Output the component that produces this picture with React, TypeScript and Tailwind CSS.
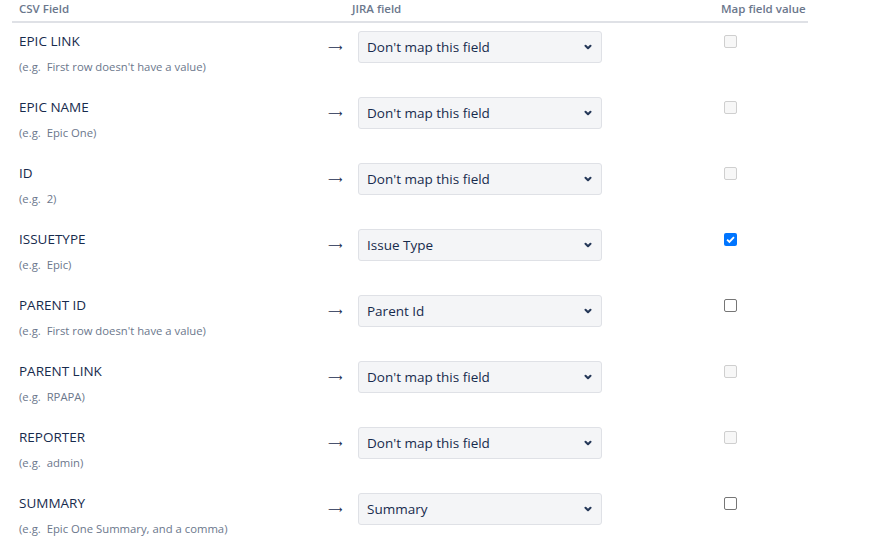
import { ChevronDown } from "lucide-react";

type Row = {
  name: string;
  example: string;
  value: string;
  mapState: "disabled" | "checked" | "unchecked";
};

const rows: Row[] = [
  { name: "EPIC LINK", example: "First row doesn't have a value", value: "Don't map this field", mapState: "disabled" },
  { name: "EPIC NAME", example: "Epic One", value: "Don't map this field", mapState: "disabled" },
  { name: "ID", example: "2", value: "Don't map this field", mapState: "disabled" },
  { name: "ISSUETYPE", example: "Epic", value: "Issue Type", mapState: "checked" },
  { name: "PARENT ID", example: "First row doesn't have a value", value: "Parent Id", mapState: "unchecked" },
  { name: "PARENT LINK", example: "RPAPA", value: "Don't map this field", mapState: "disabled" },
  { name: "REPORTER", example: "admin", value: "Don't map this field", mapState: "disabled" },
  { name: "SUMMARY", example: "Epic One Summary, and a comma", value: "Summary", mapState: "unchecked" },
];

function FieldSelect({ value }: { value: string }) {
  return (
    <div className="relative w-[244px] h-[32px]">
      <select
        defaultValue={value}
        className="appearance-none w-full h-full pl-[8px] pr-[28px] bg-[#f4f5f7] border border-[#dfe1e6] rounded-[3px] text-[13.5px] text-[#172b4d] outline-none"
      >
        <option>Don't map this field</option>
        <option>Issue Type</option>
        <option>Parent Id</option>
        <option>Summary</option>
      </select>
      <ChevronDown
        className="absolute right-[9px] top-[11px] h-[10px] w-[10px] text-[#253858] pointer-events-none"
        strokeWidth={5}
      />
    </div>
  );
}

function MapCheckbox({ state }: { state: Row["mapState"] }) {
  if (state === "disabled") {
    return <div className="h-[13px] w-[13px] rounded-[2px] border border-[#cfcfcf] bg-[#f7f7f7]" />;
  }
  if (state === "checked") {
    return (
      <div className="h-[13px] w-[13px] rounded-[2px] bg-[#0075ff] flex items-center justify-center">
        <svg viewBox="0 0 12 12" className="h-[11px] w-[11px]">
          <path d="M2.3 6.2 4.8 8.6 9.8 3.4" fill="none" stroke="white" strokeWidth="2" />
        </svg>
      </div>
    );
  }
  return <div className="h-[13px] w-[13px] rounded-[2px] border border-[#767676] bg-white" />;
}

export default function App() {
  return (
    <div className="min-h-screen bg-white font-['Open_Sans',sans-serif] text-[#172b4d]">
      <div className="ml-[12px] w-[796px]">
        <div className="flex h-[23px] border-b-2 border-[#dfe1e6] text-[11.5px] font-semibold text-[#6b778c] leading-[18px]">
          <div className="w-[333px] pl-[7px]">CSV Field</div>
          <div className="w-[376px] pl-[7px]">JIRA field</div>
          <div className="flex-1">Map field value</div>
        </div>
        {rows.map((r) => (
          <div key={r.name} className="flex h-[66px]">
            <div className="w-[306px] pl-[7px] pt-[8px]">
              <div className="text-[13.5px] leading-[20px] text-[#172b4d]">{r.name}</div>
              <div className="mt-[8px] text-[11.3px] leading-[16px] text-[#6b778c]">(e.g.&nbsp; {r.example})</div>
            </div>
            <div className="w-[40px] pt-[15px] pl-[10px] font-['DejaVu_Sans',sans-serif] text-[10px] leading-[20px] text-[#172b4d]">⟶</div>
            <div className="w-[366px] pt-[8px]">
              <FieldSelect value={r.value} />
            </div>
            <div className="pt-[12px]">
              <MapCheckbox state={r.mapState} />
            </div>
          </div>
        ))}
      </div>
    </div>
  );
}
